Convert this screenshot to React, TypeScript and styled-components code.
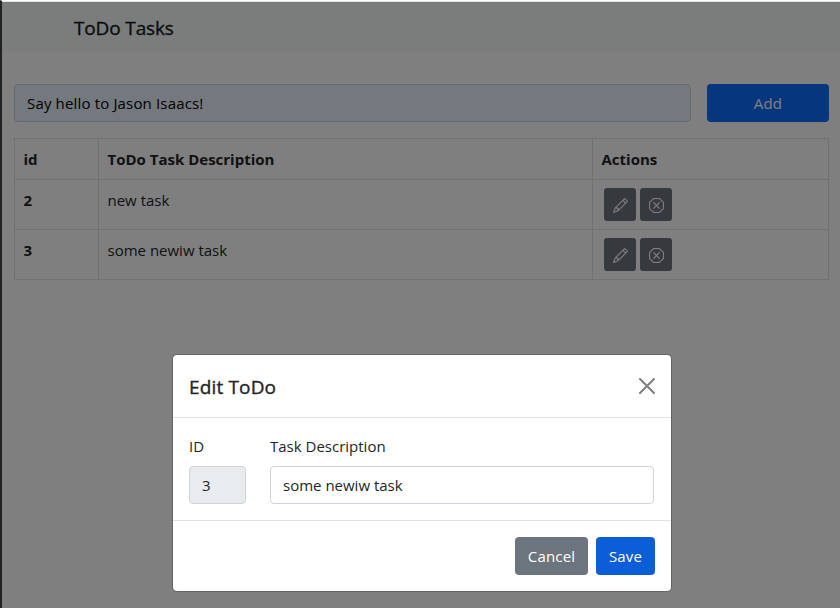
import React from 'react';
import styled, { createGlobalStyle } from 'styled-components';
import { BsPencil, BsXOctagon } from 'react-icons/bs';

const GlobalStyle = createGlobalStyle`
  *, *::before, *::after { box-sizing: border-box; }
  body {
    margin: 0;
    background: #fff;
    color: #212529;
    font-family: 'Open Sans', 'Noto Sans', sans-serif;
    font-size: 15px;
    line-height: 24px;
    overflow: hidden;
  }
  h1, h2 { margin: 0; }
`;

const Window = styled.div`
  height: 608px;
  border-left: 2px solid #222223;
  border-top: 1px solid #fff;
`;

const Page = styled.div`
  position: relative;
  height: 607px;
  border-top: 1px solid #dfe3e1;
  background: #fff;
`;

const Navbar = styled.header`
  height: 50px;
  padding: 11px 72px 0;
  background: #f7fbf9;
`;

const Brand = styled.h1`
  font-size: 19px;
  font-weight: 500;
  line-height: 30px;
  letter-spacing: -0.14px;
  color: #16181a;
  -webkit-text-stroke: 0.35px currentColor;
`;

const Content = styled.main`
  padding: 32px 11px 0 12px;
`;

const AddForm = styled.form`
  display: flex;
  gap: 16px;
  margin-bottom: 16px;
`;

const Input = styled.input<{ $letterSpacing?: string; $fill?: string }>`
  display: block;
  width: 100%;
  height: 38px;
  padding: 6px 12px;
  border: 1px solid #ced4da;
  border-radius: 4px;
  background: ${(p) => p.$fill ?? '#fff'};
  color: #212529;
  font: inherit;
  letter-spacing: ${(p) => p.$letterSpacing ?? 'normal'};
  outline: none;
`;

const NewTaskInput = styled(Input)`
  flex: 1;
  min-width: 0;
  color: #000;
`;

const Button = styled.button<{ $color: string; $width: number }>`
  flex: none;
  width: ${(p) => p.$width}px;
  height: 38px;
  padding: 0;
  border: 0;
  border-radius: 4px;
  background: ${(p) => p.$color};
  color: #fff;
  font: inherit;
  letter-spacing: 0.15px;
`;

const Table = styled.table`
  width: 100%;
  table-layout: fixed;
  border-collapse: collapse;
`;

const Cell = styled.td`
  height: 50px;
  padding: 8px 8px 0 8.5px;
  border: 1px solid #dee2e6;
  text-align: left;
  vertical-align: top;
`;

const HeadCell = styled(Cell)<{ $width?: number }>`
  width: ${(p) => (p.$width ? `${p.$width}px` : 'auto')};
  height: 41px;
  font-weight: 700;
`;

const IdCell = styled(Cell)`
  font-weight: 700;
`;

const Actions = styled.div`
  display: flex;
  gap: 4px;
  padding-left: 2.5px;
`;

const IconButton = styled.button`
  display: flex;
  align-items: flex-end;
  justify-content: center;
  width: 32px;
  height: 33px;
  padding: 0 0 8px;
  border: 0;
  border-radius: 3px;
  background: #6c757d;
  color: #fff;
  font-size: 15px;

  svg {
    stroke-width: 0.25px;
  }
`;

const Backdrop = styled.div`
  position: absolute;
  inset: 0;
  background: rgba(0, 0, 0, 0.5);
`;

const Modal = styled.section`
  position: absolute;
  top: 352px;
  left: 170px;
  width: 500px;
  border: 1px solid rgba(0, 0, 0, 0.2);
  border-radius: 5px;
  background: #fff;
  background-clip: padding-box;
`;

const ModalHeader = styled.div`
  display: flex;
  align-items: center;
  justify-content: space-between;
  height: 63px;
  padding: 0 16px;
  border-bottom: 1px solid #dee2e6;
`;

const ModalTitle = styled.h2`
  padding-top: 2px;
  font-size: 19px;
  font-weight: 500;
  line-height: 30px;
  letter-spacing: 0.15px;
  -webkit-text-stroke: 0.35px currentColor;
`;

const CloseButton = styled.button`
  display: flex;
  padding: 0;
  border: 0;
  background: none;
  opacity: 0.5;
`;

const ModalBody = styled.div`
  display: grid;
  grid-template-columns: 57px 384px;
  column-gap: 24px;
  height: 103px;
  padding: 16px;
  border-bottom: 1px solid #dee2e6;
`;

const Field = styled.label`
  display: flex;
  flex-direction: column;
  gap: 8px;
`;

const ModalFooter = styled.div`
  display: flex;
  justify-content: flex-end;
  gap: 8px;
  padding: 16px;
`;

const tasks = [
  { id: 2, description: 'new task' },
  { id: 3, description: 'some newiw task' },
];

export default function App() {
  return (
    <>
      <GlobalStyle />
      <Window>
        <Page>
          <Navbar>
            <Brand>ToDo Tasks</Brand>
          </Navbar>
          <Content>
            <AddForm>
              <NewTaskInput
                $fill="#e8f0fe"
                $letterSpacing="0.16px"
                defaultValue="Say hello to Jason Isaacs!"
              />
              <Button type="button" $color="#0d6efd" $width={122}>Add</Button>
            </AddForm>
            <Table>
              <thead>
                <tr>
                  <HeadCell as="th" $width={84}>id</HeadCell>
                  <HeadCell as="th" $width={494}>ToDo Task Description</HeadCell>
                  <HeadCell as="th">Actions</HeadCell>
                </tr>
              </thead>
              <tbody>
                {tasks.map((task) => (
                  <tr key={task.id}>
                    <IdCell as="th">{task.id}</IdCell>
                    <Cell>{task.description}</Cell>
                    <Cell>
                      <Actions>
                        <IconButton aria-label="Edit"><BsPencil /></IconButton>
                        <IconButton aria-label="Delete"><BsXOctagon /></IconButton>
                      </Actions>
                    </Cell>
                  </tr>
                ))}
              </tbody>
            </Table>
          </Content>
          <Backdrop />
          <Modal role="dialog" aria-label="Edit ToDo">
            <ModalHeader>
              <ModalTitle>Edit ToDo</ModalTitle>
              <CloseButton aria-label="Close">
                <svg width="16" height="16" viewBox="0 0 16 16" stroke="#000" strokeWidth="2" strokeLinecap="round">
                  <path d="M1 1l14 14M15 1L1 15" />
                </svg>
              </CloseButton>
            </ModalHeader>
            <ModalBody>
              <Field>
                ID
                <Input $fill="#e9ecef" readOnly value={3} />
              </Field>
              <Field>
                Task Description
                <Input defaultValue="some newiw task" />
              </Field>
            </ModalBody>
            <ModalFooter>
              <Button type="button" $color="#6c757d" $width={73}>Cancel</Button>
              <Button type="button" $color="#0b5ed7" $width={59}>Save</Button>
            </ModalFooter>
          </Modal>
        </Page>
      </Window>
    </>
  );
}
